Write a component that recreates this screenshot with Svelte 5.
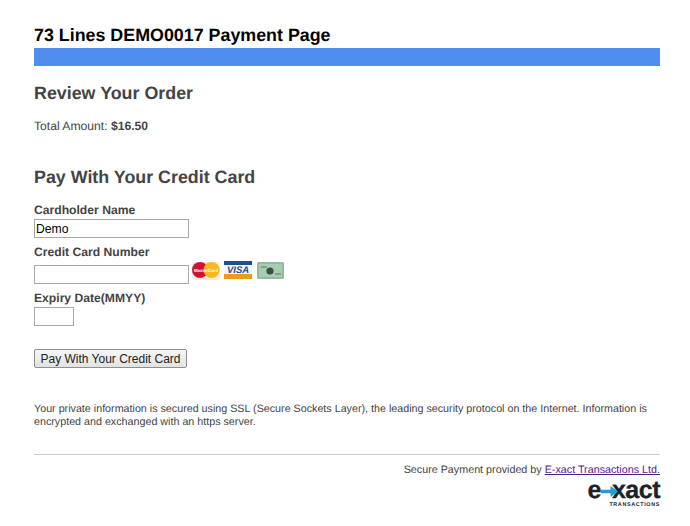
<script>
  let name = 'Demo';
</script>

<main class="page">
  <h1>73 Lines DEMO0017 Payment Page</h1>
  <div class="bar"></div>

  <h2 class="review">Review Your Order</h2>
  <p class="total">Total Amount: <strong>$16.50</strong></p>

  <h2 class="pay">Pay With Your Credit Card</h2>
  <form onsubmit={(e) => e.preventDefault()}>
    <label for="holder">Cardholder Name</label>
    <input id="holder" class="wide" type="text" bind:value={name} />

    <label for="number" class="second">Credit Card Number</label>
    <div class="card-row">
      <input id="number" class="wide" type="text" />
      <div class="cards">
        <svg width="28" height="19" viewBox="0 0 28 19">
          <rect y="1" width="28" height="18" rx="3" fill="#ececec" />
          <circle cx="8" cy="9" r="8" fill="#d3112f" />
          <circle cx="19.500" cy="9" r="8" fill="#f6b91c" />
          <text x="14" y="10.600" text-anchor="middle" class="mc">MasterCard</text>
        </svg>
        <svg width="28" height="18" viewBox="0 0 28 18">
          <rect width="28" height="18" rx="1" fill="#f4f4f2" />
          <rect width="28" height="4" fill="#1d4f8c" />
          <rect y="13" width="28" height="5" fill="#eb9a1c" />
          <text x="14" y="12.400" text-anchor="middle" class="visa">VISA</text>
        </svg>
        <svg class="amex" width="27" height="17" viewBox="0 0 27 17">
          <rect width="27" height="17" rx="2" fill="#b5b9b3" />
          <rect x="1" y="1" width="25" height="15" fill="#a6cdb0" stroke="#86ab90" />
          <circle cx="13" cy="9" r="3.600" fill="#3f4a45" />
          <rect x="4" y="4" width="6" height="2" fill="#7ea488" />
          <rect x="18" y="11" width="6" height="2" fill="#7ea488" />
        </svg>
      </div>
    </div>

    <label for="expiry" class="third">Expiry Date(MMYY)</label>
    <input id="expiry" class="short" type="text" />

    <button type="submit">Pay With Your Credit Card</button>
  </form>

  <p class="note">
    Your private information is secured using SSL (Secure Sockets Layer), the leading security protocol on the Internet. Information is encrypted and exchanged with an https server.
  </p>

  <hr />

  <footer>
    <p>Secure Payment provided by <a href="#top">E-xact Transactions Ltd.</a></p>
    <div class="logo">
      <div class="word">
        <span>e</span><svg class="arrow" width="17" height="11" viewBox="0 0 17 11"><path d="M0 3.800h9.500V0l7.500 5.500-7.500 5.500V7.200H0z" fill="#1f9fd0" /></svg><span class="rest">xact</span>
      </div>
      <div class="sub">TRANSACTIONS</div>
    </div>
  </footer>
</main>

<style>
  :global(body) {
    margin: 0;
    background: #fff;
  }

  .page {
    box-sizing: border-box;
    width: 690px;
    height: 526px;
    padding: 25px 30px 0 34px;
    font-family: "Liberation Sans", Arial, sans-serif;
    font-size: 12.150px;
    color: #444;
    overflow: hidden;
    text-rendering: geometricPrecision;
  }

  h1 {
    margin: 0;
    font-size: 17.850px;
    line-height: 20px;
    color: #000;
  }

  .bar {
    height: 18px;
    margin-top: 3px;
    background: #4f8def;
  }

  h2 {
    margin: 0;
    font-size: 17.850px;
    line-height: 20px;
    color: #444;
  }

  .review {
    margin-top: 17px;
  }

  .total {
    margin: 16px 0 0;
    line-height: 14px;
  }

  .pay {
    margin-top: 34px;
  }

  form {
    display: flex;
    flex-direction: column;
    align-items: flex-start;
    margin-top: 16px;
  }

  label {
    font-size: 12.150px;
    font-weight: bold;
    line-height: 14px;
    color: #444;
  }

  label.second {
    margin-top: 7px;
  }

  label.third {
    margin-top: 7px;
  }

  input {
    box-sizing: border-box;
    height: 19px;
    margin: 2px 0 0;
    padding: 1px;
    border: 1px solid #a9a9a9;
    background: #fff;
    font-family: "Liberation Sans", Arial, sans-serif;
    font-size: 12.150px;
    color: #000;
  }

  .wide {
    width: 155px;
  }

  .short {
    width: 40px;
  }

  .card-row {
    display: flex;
    align-items: flex-start;
  }

  .card-row input {
    margin: 6px 0 0;
  }

  .cards {
    display: flex;
    align-items: flex-start;
    gap: 4px;
    margin-left: 3px;
    padding-top: 2px;
  }

  .amex {
    margin-left: 1px;
    margin-top: 1px;
  }

  .mc {
    font-family: "Liberation Sans", Arial, sans-serif;
    font-size: 4.400px;
    font-weight: bold;
    fill: #fff;
  }

  .visa {
    font-family: "Liberation Sans", Arial, sans-serif;
    font-size: 9.500px;
    font-weight: bold;
    font-style: italic;
    fill: #1d4f8c;
  }

  button {
    box-sizing: border-box;
    width: 153px;
    height: 19px;
    margin-top: 23px;
    padding: 0;
    border: 1px solid #8f8f8f;
    border-radius: 2px;
    background: linear-gradient(#f6f6f6, #e2e2e2);
    font-family: "Liberation Sans", Arial, sans-serif;
    font-size: 12px;
    color: #222;
  }

  .note {
    margin: 35px 0 0;
    font-size: 10.730px;
    line-height: 13px;
  }

  hr {
    height: 1px;
    margin: 25px 0 0;
    border: 0;
    background: #ccc;
  }

  footer {
    display: flex;
    flex-direction: column;
    align-items: flex-end;
    margin-top: 8px;
  }

  footer p {
    margin: 0;
    font-size: 10.750px;
    line-height: 14px;
  }

  a {
    color: #551a8b;
    text-decoration: underline;
  }

  .logo {
    display: flex;
    flex-direction: column;
    align-items: flex-end;
    margin-top: 4px;
    color: #1b2328;
  }

  .word {
    display: flex;
    align-items: center;
    height: 18px;
    font-size: 25px;
    font-weight: bold;
    line-height: 18px;
    letter-spacing: -0.500px;
    -webkit-text-stroke: 0.300px #1b2328;
  }

  .arrow {
    margin: 2px -6px 0 0;
    position: relative;
    z-index: 1;
  }

  .sub {
    margin-top: 3px;
    font-size: 5.400px;
    font-weight: bold;
    line-height: 6px;
    letter-spacing: 0.650px;
  }
</style>
